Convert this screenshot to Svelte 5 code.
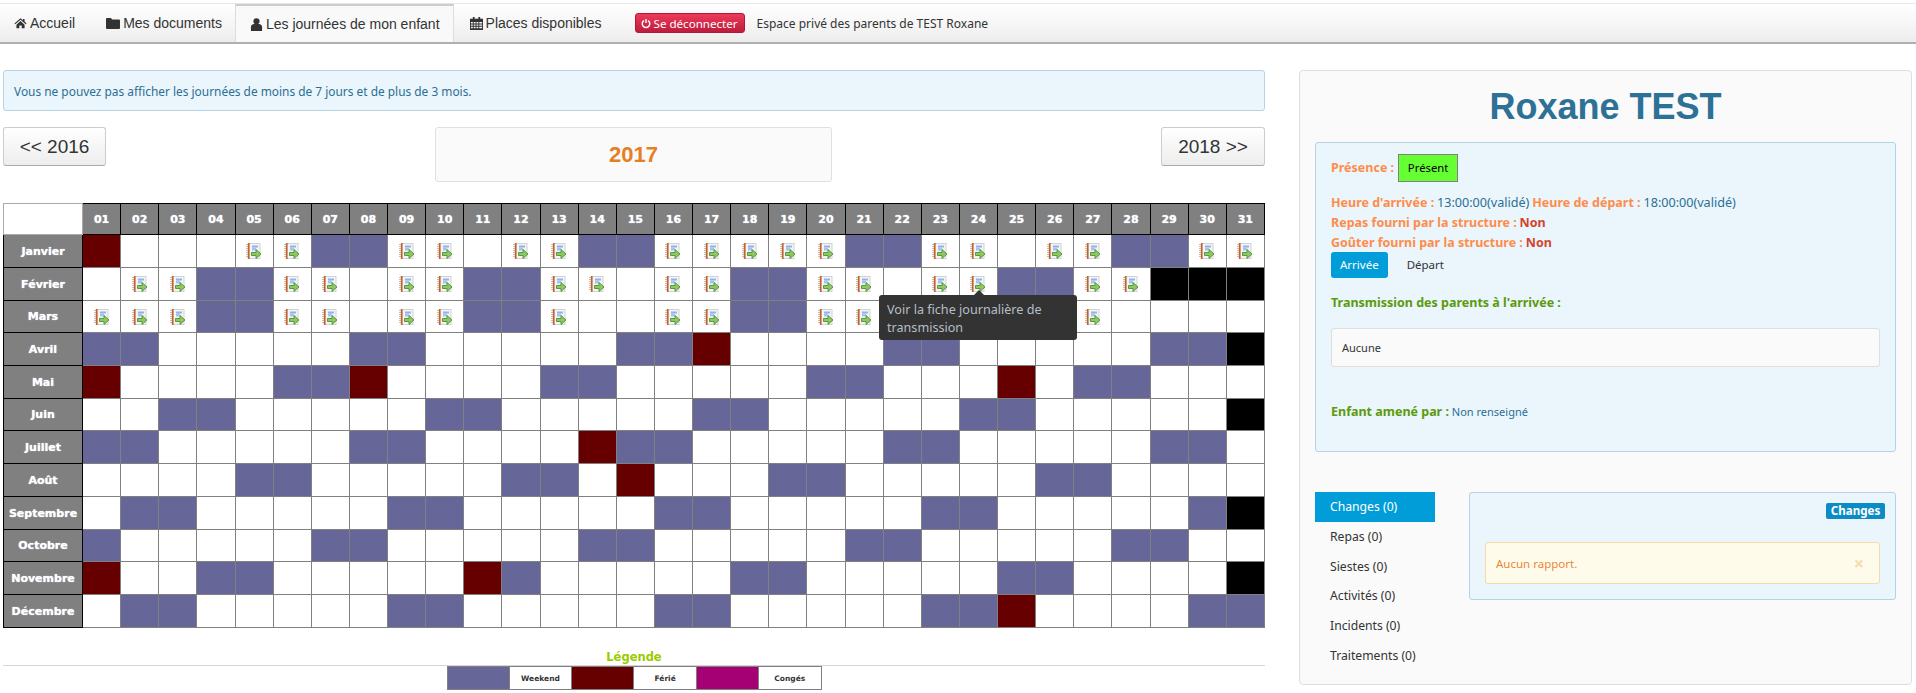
<script>
  const months = [
    { name: "Janvier", we: [7, 8, 14, 15, 21, 22, 28, 29], red: [1], off: [], notes: [5, 6, 9, 10, 12, 13, 16, 17, 18, 19, 20, 23, 24, 26, 27, 30, 31] },
    { name: "Février", we: [4, 5, 11, 12, 18, 19, 25, 26], red: [], off: [29, 30, 31], notes: [2, 3, 6, 7, 9, 10, 13, 14, 16, 17, 20, 21, 23, 24, 27, 28] },
    { name: "Mars", we: [4, 5, 11, 12, 18, 19, 25, 26], red: [], off: [], notes: [1, 2, 3, 6, 7, 9, 10, 13, 16, 17, 20, 21, 27], short: true },
    { name: "Avril", we: [1, 2, 8, 9, 15, 16, 22, 23, 29, 30], red: [17], off: [31], notes: [] },
    { name: "Mai", we: [6, 7, 13, 14, 20, 21, 27, 28], red: [1, 8, 25], off: [], notes: [] },
    { name: "Juin", we: [3, 4, 10, 11, 17, 18, 24, 25], red: [], off: [31], notes: [], short: true },
    { name: "Juillet", we: [1, 2, 8, 9, 15, 16, 22, 23, 29, 30], red: [14], off: [], notes: [] },
    { name: "Août", we: [5, 6, 12, 13, 19, 20, 26, 27], red: [15], off: [], notes: [] },
    { name: "Septembre", we: [2, 3, 9, 10, 16, 17, 23, 24, 30], red: [], off: [31], notes: [] },
    { name: "Octobre", we: [1, 7, 8, 14, 15, 21, 22, 28, 29], red: [], off: [], notes: [], short: true },
    { name: "Novembre", we: [4, 5, 12, 18, 19, 25, 26], red: [1, 11], off: [31], notes: [] },
    { name: "Décembre", we: [2, 3, 9, 10, 16, 17, 23, 24, 30, 31], red: [25], off: [], notes: [] }
  ];
  const days = Array.from({ length: 31 }, (_, i) => i + 1);
  const pad = (n) => String(n).padStart(2, "0");
  const tabs = ["Changes (0)", "Repas (0)", "Siestes (0)", "Activités (0)", "Incidents (0)", "Traitements (0)"];

  function cellClass(m, d) {
    if (m.off.includes(d)) return "off";
    if (m.red.includes(d)) return "red";
    if (m.we.includes(d)) return "we";
    return "";
  }
</script>

<div class="page">
  <nav class="navbar">
    <a class="nav-item">
      <svg viewBox="0 0 16 14" width="13" height="12"><path d="M8 1 0.5 7.500l1 1L8 3l6.500 5.500 1-1L13 5.300V2h-2v1.600zM3 9v4.500h3.500V10h3v3.500H13V9L8 4.600z" fill="#333"/></svg>
      Accueil
    </a>
    <a class="nav-item">
      <svg viewBox="0 0 14 12" width="14" height="12"><path d="M0 2q0-1 1-1h4l1 1.500h7q1 0 1 1V11q0 1-1 1H1q-1 0-1-1z" fill="#333"/></svg>
      Mes documents
    </a>
    <a class="nav-item active">
      <svg viewBox="0 0 12 14" width="13" height="13"><circle cx="6" cy="3.500" r="3.300" fill="#333"/><path d="M0 14V10q0-3 3-3.500h6q3 .5 3 3.500v4z" fill="#333"/></svg>
      Les journées de mon enfant
    </a>
    <a class="nav-item">
      <svg viewBox="0 0 14 14" width="13" height="13"><path d="M0 2h3V0h2v2h4V0h2v2h3v12H0zm1 3.500V7h2V5.500zm3 0V7h2V5.500zm3 0V7h2V5.500zm3 0V7h3V5.500zM1 8v1.500h2V8zm3 0v1.500h2V8zm3 0v1.500h2V8zm3 0v1.500h3V8zm-9 2.500V12h2v-1.500zm3 0V12h2v-1.500zm3 0V12h2v-1.500zm3 0V12h3v-1.500z" fill="#333" fill-rule="evenodd"/></svg>
      Places disponibles
    </a>
    <button class="logout">
      <svg viewBox="0 0 12 12" width="10" height="11"><path d="M3.500 2.500a4.500 4.500 0 1 0 5 0M6 .5v5" fill="none" stroke="#fff" stroke-width="1.700"/></svg>
      Se déconnecter
    </button>
    <span class="nav-text">Espace privé des parents de TEST Roxane</span>
  </nav>

  <div class="columns">
    <main class="left">
      <div class="info-banner">Vous ne pouvez pas afficher les journées de moins de 7 jours et de plus de 3 mois.</div>

      <div class="year-row">
        <button class="year-btn">&lt;&lt; 2016</button>
        <div class="year-box">2017</div>
        <button class="year-btn next">2018 &gt;&gt;</button>
      </div>

      <table class="calendar">
        <thead>
          <tr>
            <th class="corner"></th>
            {#each days as d}
              <th class="head">{pad(d)}</th>
            {/each}
          </tr>
        </thead>
        <tbody>
          {#each months as m}
            <tr class:short={m.short}>
              <th class="head month">{m.name}</th>
              {#each days as d}
                <td class={cellClass(m, d)}>
                  {#if m.notes.includes(d)}
                    <svg class="note" viewBox="0 0 16 16" width="16" height="16">
                      <rect x="2" y="0.500" width="12" height="15" fill="#f4f4f4" stroke="#d2d2d2"/>
                      <path d="M1 1v14" stroke="#c99b7a" stroke-width="1.400" stroke-dasharray="1 1"/>
                      <rect x="2" y="0" width="1.600" height="16" fill="#c4622d"/>
                      <rect x="6" y="2.500" width="6" height="2" fill="#8db4ec"/>
                      <rect x="6" y="4.500" width="4" height="3" fill="#a8c4ee"/>
                      <path d="M5.500 9.500H10V6.500l5 4.500-5 4.500v-3H5.500z" fill="#8cc865" stroke="#4f9132" stroke-width="0.900"/>
                    </svg>
                  {/if}
                </td>
              {/each}
            </tr>
          {/each}
        </tbody>
      </table>

      <div class="legend-title">Légende</div>
      <table class="legend">
        <tbody>
          <tr>
            <td class="we"></td><td>Weekend</td>
            <td class="red"></td><td>Férié</td>
            <td class="conge"></td><td>Congés</td>
          </tr>
        </tbody>
      </table>

      <div class="tooltip">Voir la fiche journalière de transmission</div>
    </main>

    <aside class="panel">
      <h1>Roxane TEST</h1>

      <section class="blue-box detail">
        <p class="presence"><b class="orange">Présence :</b> <span class="present">Présent</span></p>
        <p><b class="orange">Heure d'arrivée :</b> <span class="time">13:00:00(validé)</span> <b class="orange">Heure de départ :</b> <span class="time">18:00:00(validé)</span></p>
        <p><b class="orange">Repas fourni par la structure :</b> <b class="no">Non</b></p>
        <p><b class="orange">Goûter fourni par la structure :</b> <b class="no">Non</b></p>
        <div class="pills">
          <span class="pill on">Arrivée</span>
          <span class="pill">Départ</span>
        </div>
        <p class="green-title"><b>Transmission des parents à l'arrivée :</b></p>
        <div class="well">Aucune</div>
        <p class="brought"><b>Enfant amené par :</b> Non renseigné</p>
      </section>

      <div class="reports">
        <ul class="side-tabs">
          {#each tabs as t, i}
            <li class:on={i === 0}>{t}</li>
          {/each}
        </ul>
        <section class="blue-box report">
          <div class="label-row"><span class="label">Changes</span></div>
          <div class="warning">
            <span>Aucun rapport.</span>
            <span class="close">×</span>
          </div>
        </section>
      </div>
    </aside>
  </div>
</div>

<style>
  :global(body) {
    background: #fff;
    font-family: "Noto Sans", sans-serif;
    font-size: 11px;
    color: #333;
    overflow: hidden;
  }
  .page {
    height: 693px;
    padding-top: 3px;
    box-sizing: border-box;
    overflow: hidden;
  }
  .navbar {
    display: flex;
    align-items: center;
    box-sizing: border-box;
    height: 41px;
    border-top: 1px solid #e8e8e8;
    border-bottom: 2px solid #b0b0b0;
    background: linear-gradient(#fff, #ededed);
  }
  .nav-item {
    display: flex;
    align-items: center;
    gap: 3px;
    box-sizing: border-box;
    height: 100%;
    padding: 0 15px 0 16px;
    font-family: "Liberation Sans", sans-serif;
    font-size: 14px;
    color: #333;
  }
  .nav-item:first-child {
    padding-left: 14px;
  }
  .nav-item:nth-child(2) {
    padding-right: 13px;
  }
  .nav-item.active {
    padding: 0 13px 0 14px;
    background: #f9f9f9;
    border-left: 1px solid #ddd;
    border-right: 1px solid #ddd;
    border-top: 2px solid #ccc;
  }
  .logout {
    display: flex;
    align-items: center;
    gap: 3px;
    box-sizing: border-box;
    width: 110px;
    height: 20px;
    margin-left: 18px;
    padding: 0 0 0 5px;
    border: 1px solid #b4163a;
    border-radius: 3px;
    background: linear-gradient(#ee3a5a, #bd1c3c);
    color: #fff;
    font-family: "Noto Sans", sans-serif;
    font-size: 11.600px;
    white-space: nowrap;
  }
  .nav-text {
    margin-left: 12px;
    font-size: 12px;
  }
  .columns {
    display: flex;
    align-items: flex-start;
    gap: 34px;
    padding-left: 3px;
  }
  .left {
    position: relative;
    width: 1262px;
    flex: none;
    padding-top: 26px;
  }
  .info-banner {
    box-sizing: border-box;
    height: 41px;
    line-height: 41px;
    padding-left: 10px;
    border: 1px solid #b5d3e5;
    border-radius: 3px;
    background: #eaf5fc;
    color: #2a6f93;
    font-size: 11.900px;
  }
  .year-row {
    display: flex;
    justify-content: space-between;
    align-items: flex-start;
    margin-top: 16px;
    height: 76px;
  }
  .year-btn {
    height: 39px;
    width: 103px;
    padding: 0;
    border: 1px solid #ccc;
    border-bottom-color: #aaa;
    border-radius: 3px;
    background: linear-gradient(#fff, #ededed);
    color: #333;
    font-family: "Liberation Sans", sans-serif;
    font-size: 19px;
  }
  .year-btn.next {
    width: 104px;
  }
  .year-box {
    box-sizing: border-box;
    width: 397px;
    height: 55px;
    line-height: 53px;
    border: 1px solid #e0e0e0;
    border-radius: 3px;
    background: #fafafa;
    text-align: center;
    color: #e67e22;
    font-family: "Liberation Sans", sans-serif;
    font-weight: bold;
    font-size: 22px;
  }
  .calendar {
    table-layout: fixed;
    width: 1262px;
    border-collapse: collapse;
    font-family: "DejaVu Sans", sans-serif;
  }
  .calendar th, .calendar td {
    height: 32px;
    padding: 0;
    border: 1px solid #808080;
    text-align: center;
    background: #fff;
  }
  .calendar tr.short th, .calendar tr.short td {
    height: 31px;
  }
  .calendar thead th {
    height: 30px;
  }
  .calendar .corner {
    width: 78px;
    background: #fff;
    border-color: #aaa;
  }
  .calendar .head {
    background: #808080;
    border-color: #000;
    color: #fff;
    font-size: 11px;
    font-weight: bold;
    text-shadow: 0 0 1px #e8f4ff;
  }
  .calendar td.we, .legend td.we { background: #666699; }
  .calendar td.red, .legend td.red { background: #660000; }
  .calendar td.off { background: #000; }
  .legend td.conge { background: #a50074; }
  .note {
    display: block;
    margin: 0 auto;
  }
  .legend-title {
    box-sizing: border-box;
    height: 16px;
    margin-top: 22px;
    line-height: 15px;
    text-align: center;
    color: #9acb00;
    font-family: "DejaVu Sans", sans-serif;
    font-weight: bold;
    font-size: 11.500px;
    border-bottom: 1px solid #d5d5d5;
  }
  .legend {
    width: 375px;
    height: 24px;
    margin: 0 auto;
    border-collapse: collapse;
    table-layout: fixed;
    font-family: "DejaVu Sans", sans-serif;
    font-size: 7.500px;
    font-weight: bold;
    text-align: center;
  }
  .legend td {
    border: 1px solid #808080;
    padding: 0;
  }
  .tooltip {
    position: absolute;
    left: 876px;
    top: 251px;
    box-sizing: border-box;
    width: 198px;
    height: 45px;
    padding: 6px 8px;
    border-radius: 3px;
    background: #333;
    color: #b5bfc6;
    font-size: 12.600px;
    line-height: 17.500px;
  }
  .tooltip::before {
    content: "";
    position: absolute;
    left: 95px;
    top: -5px;
    border: 5px solid transparent;
    border-top: 0;
    border-bottom-color: #333;
  }
  .panel {
    box-sizing: border-box;
    flex: none;
    width: 613px;
    height: 615px;
    margin-top: 26px;
    padding: 0 15px;
    border: 1px solid #dedede;
    border-radius: 4px;
    background: #fafafa;
  }
  h1 {
    height: 56px;
    margin: 15px 0 0;
    line-height: 42px;
    text-align: center;
    color: #2d7196;
    font-family: "Liberation Sans", sans-serif;
    font-size: 36px;
    font-weight: bold;
  }
  .blue-box {
    box-sizing: border-box;
    border: 1px solid #b5d3e5;
    border-radius: 3px;
    background: #eaf5fc;
    color: #2a6f93;
  }
  .detail {
    height: 310px;
    padding: 11px 15px;
  }
  p { margin: 0; }
  .detail p {
    height: 20px;
    line-height: 20px;
    white-space: nowrap;
  }
  .detail b {
    font-size: 12.500px;
  }
  .time {
    font-size: 12.600px;
  }
  .detail .presence {
    display: flex;
    align-items: center;
    gap: 4px;
    height: 28px;
    margin-bottom: 11px;
  }
  .orange { color: #ff8c4a; }
  .no { color: #d2452c; }
  .present {
    box-sizing: border-box;
    width: 60px;
    height: 28px;
    line-height: 26px;
    text-align: center;
    border: 1px solid #808080;
    background: #66ff33;
    color: #000;
    font-size: 11.300px;
  }
  .pills {
    display: flex;
    gap: 2px;
    height: 26px;
    margin-top: -1px;
    font-size: 11.500px;
  }
  .pill {
    padding: 0 9px;
    line-height: 26px;
    border-radius: 3px;
    color: #333;
  }
  .pill.on {
    background: #009dd9;
    color: #fff;
  }
  .pill + .pill {
    margin-left: 8px;
  }
  .detail .green-title {
    margin-top: 15px;
    color: #5b9a0a;
  }
  .well {
    box-sizing: border-box;
    height: 39px;
    line-height: 37px;
    margin-top: 15px;
    padding-left: 10px;
    border: 1px solid #dedede;
    border-radius: 3px;
    background: #fafafa;
    color: #333;
  }
  .detail .brought {
    margin-top: 35px;
  }
  .brought b { color: #5b9a0a; }
  .reports {
    display: flex;
    gap: 34px;
    margin-top: 40px;
  }
  .side-tabs {
    list-style: none;
    flex: none;
    width: 120px;
    margin: 0;
    padding: 0;
    font-size: 12.200px;
  }
  .side-tabs li {
    height: 29.800px;
    line-height: 30px;
    padding-left: 15px;
    color: #333;
  }
  .side-tabs li.on {
    background: #009dd9;
    color: #fff;
  }
  .report {
    flex: 1;
    height: 108px;
    padding: 10px 15px 0;
  }
  .label-row {
    display: flex;
    justify-content: flex-end;
    margin-right: -5px;
  }
  .label {
    box-sizing: border-box;
    width: 59px;
    height: 16px;
    line-height: 15px;
    text-align: center;
    border-radius: 2px;
    background: #0c8cc5;
    color: #fff;
    font-size: 11.600px;
    font-weight: bold;
  }
  .warning {
    display: flex;
    justify-content: space-between;
    align-items: center;
    box-sizing: border-box;
    height: 42px;
    margin-top: 23px;
    padding: 0 15px 0 10px;
    border: 1px solid #f7d9a8;
    border-radius: 3px;
    background: #fffbea;
    color: #e9883a;
    font-size: 11.500px;
  }
  .close {
    color: #f5dcb0;
    font-size: 18px;
    font-weight: bold;
  }
</style>
